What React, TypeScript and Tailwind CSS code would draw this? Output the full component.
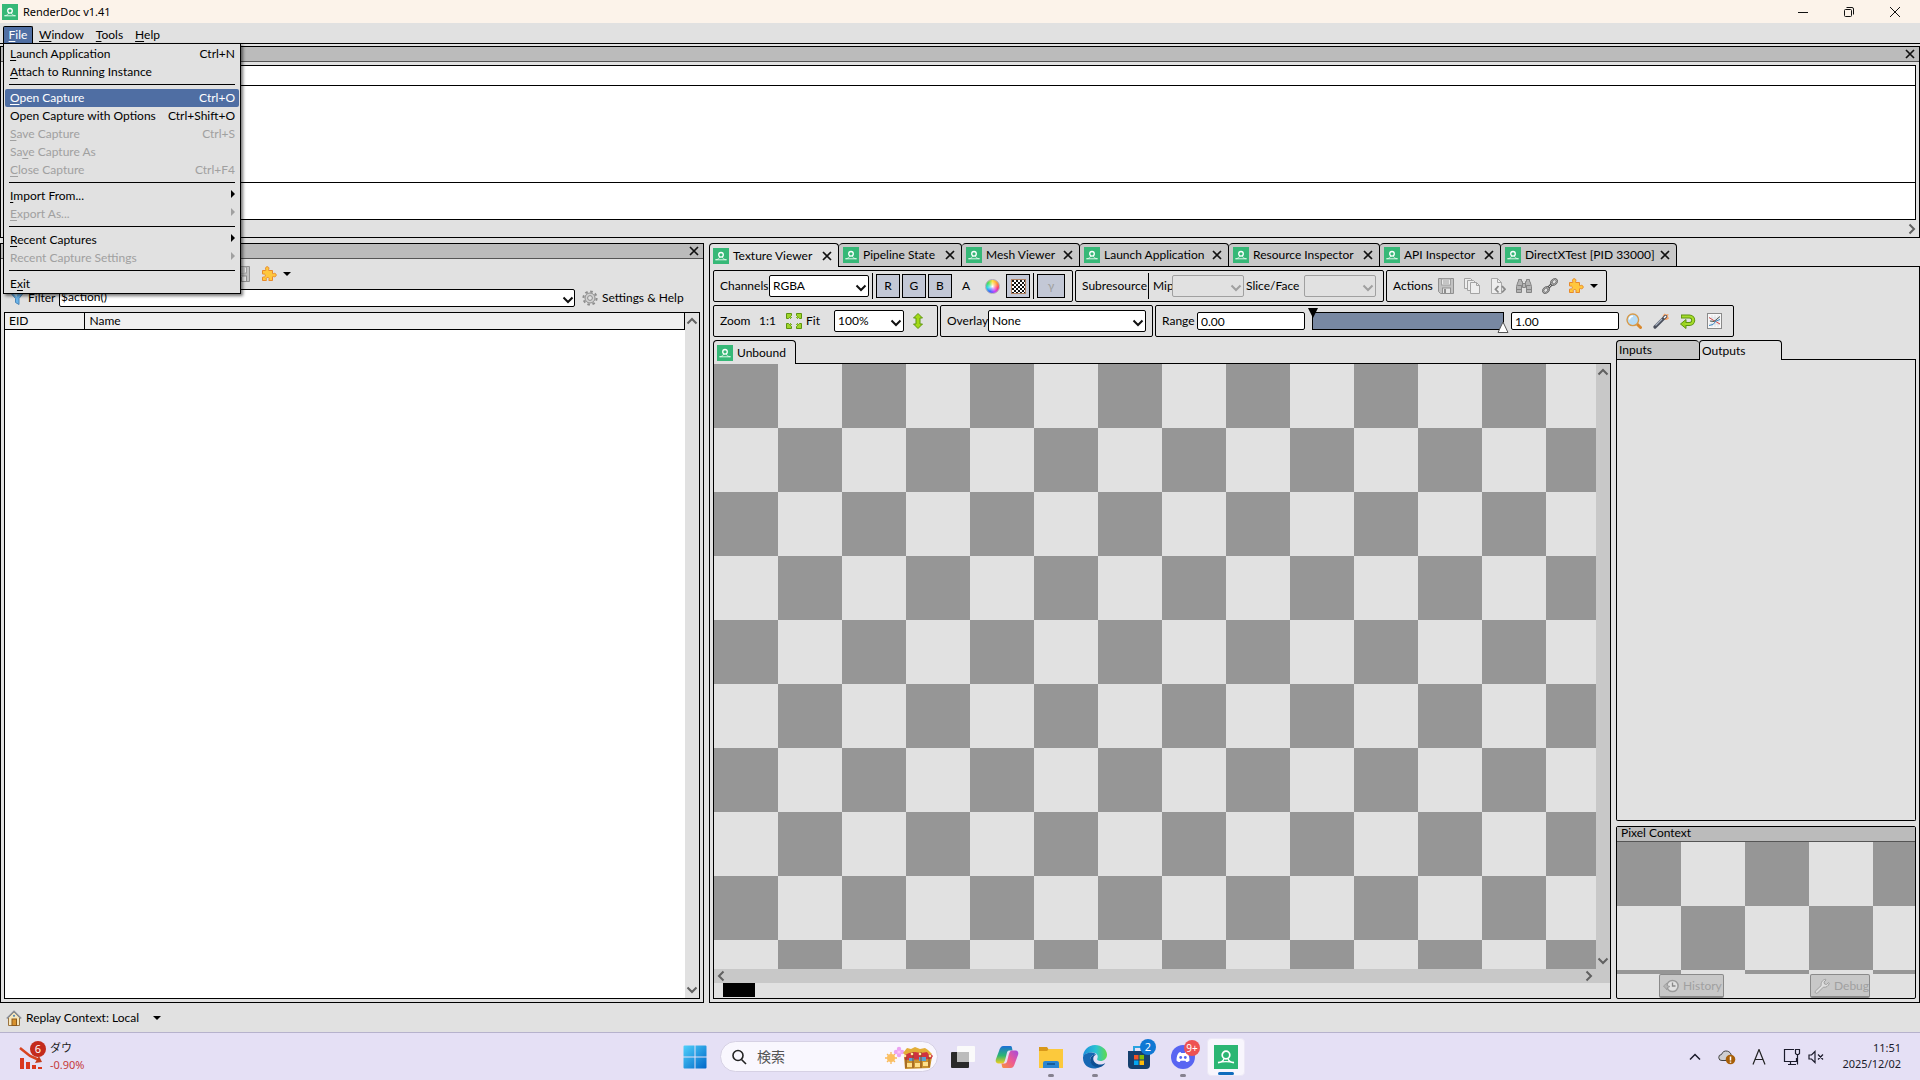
import React, { useState } from 'react';

const CHECKER = 'bg-[conic-gradient(#e1e1e1_25%,#969696_0_50%,#e1e1e1_0_75%,#969696_0)] bg-size-[128px_128px]';

const Logo: React.FC<{ className?: string }> = ({ className = 'w-4 h-4' }) => (
  <svg viewBox="0 0 16 16" className={`shrink-0 ${className}`}>
    <rect width="16" height="16" fill="#36b877" />
    <circle cx="8" cy="6.800" r="2.300" fill="none" stroke="#fff" strokeWidth="1.300" />
    <path d="M2.500 11.700c2.200 0 3.700-.8 4.100-2.700M13.500 11.700c-2.200 0-3.700-.8-4.100-2.700M2.500 11.800h11" fill="none" stroke="#d9f5e6" />
  </svg>
);

const Cross: React.FC<{ className?: string }> = ({ className = 'w-[10px] h-[10px]' }) => (
  <svg viewBox="0 0 10 10" className={`shrink-0 ${className}`}>
    <path d="M1 1l8 8M9 1l-8 8" stroke="#111" strokeWidth="1.7" />
  </svg>
);

const Chevron: React.FC<{ className?: string; color?: string }> = ({ className = '', color = '#606060' }) => (
  <svg viewBox="0 0 12 8" className={`w-3 h-2 shrink-0 ${className}`}>
    <path d="M1.500 1.500L6 6l4.500-4.500" fill="none" stroke={color} strokeWidth="2" />
  </svg>
);

const DropArrow = () => (
  <svg viewBox="0 0 8 4" className="w-2 h-1 shrink-0"><path d="M0 0h8L4 4z" /></svg>
);

const SaveIcon = () => (
  <svg viewBox="0 0 16 16" className="w-4 h-4 shrink-0">
    <path d="M.5 .5h15v15H2.500l-2-2z" fill="#c2c2c2" stroke="#909090" />
    <rect x="3.500" y="1" width="9" height="6" fill="#e9e9e9" stroke="#a0a0a0" />
    <path d="M5 3h6M5 5h6" stroke="#a0a0a0" />
    <rect x="4.500" y="10" width="8" height="5.500" fill="#e5e5e5" stroke="#909090" />
    <rect x="6" y="11" width="2" height="4" fill="#8d8d8d" />
  </svg>
);

const CopyIcon = () => (
  <svg viewBox="0 0 16 16" className="w-4 h-4 shrink-0" fill="#eee" stroke="#a3a3a3">
    <path d="M.5 .5h6l2 2v8h-8z" />
    <path d="M3.500 2.500h6l2 2v8h-8z" />
    <path d="M6.500 4.500h6l3 3v8h-9z" />
    <path d="M12.500 4.500v3h3" fill="none" />
  </svg>
);

const CodeFileIcon = () => (
  <svg viewBox="0 0 16 16" className="w-4 h-4 shrink-0">
    <path d="M1.500 .5h6l4 4v11h-10z" fill="#eee" stroke="#a8a8a8" />
    <path d="M7.500 .5v4h4" fill="none" stroke="#a8a8a8" />
    <path d="M8.500 8L5.500 11.300l3 3.200M12 8l3 3.300-3 3.200" fill="none" stroke="#8a8a8a" strokeWidth="1.800" />
  </svg>
);

const BinocularsIcon = () => (
  <svg viewBox="0 0 16 16" className="w-4 h-4 shrink-0" stroke="#858585" fill="#b4b4b4">
    <path d="M2.500 1.500h3v2h1v4h-1v7h-5V8.500l1.500-5h.5z" />
    <path d="M13.500 1.500h-3v2h-1v4h1v7h5V8.500L14 3.500h-.5z" />
    <path d="M6.500 5.500h3v4h-3zM.5 11.500h5M10.500 11.500h5M1.500 7.500h4M10.500 7.500h4" />
  </svg>
);

const LinkIcon = () => (
  <svg viewBox="0 0 16 16" className="w-4 h-4 shrink-0" fill="none">
    <path d="M5 11l6-6" stroke="#555" strokeWidth="2.600" />
    <path d="M5 11l6-6" stroke="#ccc" />
    <ellipse cx="4" cy="12" rx="3.200" ry="2.300" transform="rotate(-45 4 12)" stroke="#5c5c5c" strokeWidth="2" />
    <ellipse cx="12" cy="4" rx="3.200" ry="2.300" transform="rotate(-45 12 4)" stroke="#5c5c5c" strokeWidth="2" />
    <ellipse cx="4" cy="12" rx="3.200" ry="2.300" transform="rotate(-45 4 12)" stroke="#c4c4c4" strokeWidth=".7" />
    <ellipse cx="12" cy="4" rx="3.200" ry="2.300" transform="rotate(-45 12 4)" stroke="#c4c4c4" strokeWidth=".7" />
  </svg>
);

const PuzzleIcon = () => (
  <svg viewBox="0 0 16 16" className="w-4 h-4 shrink-0">
    <path
      d="M1.500 4.500h3.200c.6-.4-.4-1.200-.2-2.200.2-1 .8-1.600 1.700-1.600s1.600.6 1.700 1.600c.1 1-.8 1.800-.2 2.200h3.800v3c.4.500 1.100-.2 2-.2 1 0 1.700.8 1.700 1.800s-.7 1.700-1.700 1.700c-.9 0-1.600-.7-2-.1v3.800H7.900c-.5-.5.3-1 .3-1.700 0-.8-.7-1.300-1.500-1.300s-1.500.5-1.500 1.300c0 .7.700 1.200.2 1.700H1.500v-3.300c.5-.6 1.400 0 2-.3.500-.2.800-.7.800-1.400s-.3-1.200-.8-1.400c-.6-.2-1.500.3-2-.2z"
      fill="#ffc73d" stroke="#e8892a"
    />
  </svg>
);

const FunnelIcon = () => (
  <svg viewBox="0 0 16 16" className="w-4 h-4 shrink-0">
    <path d="M.5 1.500h15l-5.500 7v6l-3.500-2v-4z" fill="#69b4ea" stroke="#4c86b8" />
    <path d="M3 2.500h6L7.500 7z" fill="#c6e6fb" />
  </svg>
);

const GearIcon = () => (
  <svg viewBox="0 0 16 16" className="w-4 h-4 shrink-0" fill="none">
    <circle cx="8" cy="8" r="6.600" stroke="#8d8d8d" strokeWidth="2" strokeDasharray="2.600 2.580" />
    <circle cx="8" cy="8" r="5" stroke="#8d8d8d" fill="#d2d2d2" />
    <circle cx="8" cy="8" r="2.400" stroke="#8d8d8d" fill="#e1e1e1" />
  </svg>
);

const FitIcon = () => (
  <svg viewBox="0 0 16 16" className="w-4 h-4 shrink-0" fill="#9fd62a" stroke="#5d9410">
    <path d="M.5 .5h5v2l-1 1 1 1-1 1-1-1-1 1h-2zM15.500 .5h-5v2l1 1-1 1 1 1 1-1 1 1h2z" />
    <path d="M.5 15.500h5v-2l-1-1 1-1-1-1-1 1-1-1h-2zM15.500 15.500h-5v-2l1-1-1-1 1-1 1 1 1-1h2z" />
  </svg>
);

const UpDownIcon = () => (
  <svg viewBox="0 0 16 16" className="w-4 h-4 shrink-0">
    <path d="M8 .5l4.500 4.500H10v6h2.500L8 15.500 3.500 11H6V5H3.500z" fill="#a3d916" stroke="#5f980f" />
  </svg>
);

const ColorWheel = () => (
  <span className="w-[15px] h-[15px] rounded-full border border-[#b0a8b8] bg-[radial-gradient(circle,#fff_0%,#ffffff80_25%,transparent_60%),conic-gradient(#ffe03a,#ff9a30,#ff3b6b,#c63bff,#3b62ff,#28d6e8,#43e05a,#ffe03a)]" />
);

const CheckerIcon = () => (
  <span className="w-[15px] h-[15px] border border-[#b08060] bg-[conic-gradient(#fff_25%,#111_0_50%,#fff_0_75%,#111_0)] bg-size-[4px_4px]" />
);

const MagnifierIcon = () => (
  <svg viewBox="0 0 16 16" className="w-4 h-4 shrink-0">
    <path d="M10.500 10.500l4 4" stroke="#d9882c" strokeWidth="3" strokeLinecap="round" />
    <circle cx="6.800" cy="6.800" r="5.800" fill="#b8dcf6" stroke="#d79a4a" strokeWidth="1.400" />
    <path d="M3.500 6.500a3.400 3.400 0 0 1 3.400-3.300" fill="none" stroke="#fff" strokeWidth="1.500" />
  </svg>
);

const WandIcon = () => (
  <svg viewBox="0 0 16 16" className="w-4 h-4 shrink-0">
    <path d="M9.500 3l2-2.500 1.500 1L15.500 1l-.5 2.500 1 2-2.500 1.500-2 0z" fill="#f7a568" />
    <path d="M2 14L12.500 3.500" stroke="#4a4f5c" strokeWidth="3.200" strokeLinecap="round" />
    <path d="M2.500 12.500L9 6" stroke="#a9b2c0" strokeWidth="1.200" />
    <path d="M11 5l2-2" stroke="#fff" strokeWidth="1.500" />
  </svg>
);

const ReturnIcon = () => (
  <svg viewBox="0 0 16 16" className="w-4 h-4 shrink-0">
    <path d="M1 3.500h8.500a3.700 3.700 0 0 1 0 7.500H5" fill="none" stroke="#5c9410" strokeWidth="4" />
    <path d="M6 6.500v9L.5 11z" fill="#9ad31d" stroke="#5c9410" />
    <path d="M1.800 3.500h7.700a3.700 3.700 0 0 1 0 7.500H5" fill="none" stroke="#a6dc2a" strokeWidth="2.200" />
  </svg>
);

const HistogramIcon = () => (
  <svg viewBox="0 0 16 16" className="w-4 h-4 shrink-0" fill="none">
    <rect x=".5" y=".5" width="14" height="15" fill="#f8f8f8" stroke="#8a8a8a" />
    <path d="M2 5h11M2 8h11M2 11h11M5 2v12M8 2v12M11 2v12" stroke="#d3d8df" strokeWidth=".7" />
    <path d="M2 4.500l4 2.500 7 4" stroke="#d24a4a" />
    <path d="M2 12.500l4-1 3-3.500 4-1.500" stroke="#3a86c4" />
    <path d="M3 8l4 .5 6-5" stroke="#4c5a54" />
  </svg>
);

const ClockBackIcon = () => (
  <svg viewBox="0 0 16 16" className="w-4 h-4 shrink-0" fill="none">
    <circle cx="9.500" cy="8" r="5.600" stroke="#9b9b9b" strokeWidth="1.500" fill="#e0e0e0" />
    <path d="M9.500 4.500V8h3" stroke="#888" strokeWidth="1.300" />
    <path d="M.5 8L4 5v2.500l3 1-3 1.500V12z" fill="#b5b5b5" stroke="#999" strokeWidth=".8" />
  </svg>
);

const WrenchIcon = () => (
  <svg viewBox="0 0 16 16" className="w-4 h-4 shrink-0">
    <path d="M1.200 13.300l6-5.800C6.700 5 8 2 11.500 1.200l.5.800-2 2 .5 2 2 .5 2-2 .8.500c-.5 3.200-3.300 4.700-6 4.200L3.500 15c-1.200 1-3-.5-2.300-1.700z" fill="#dedede" stroke="#a0a0a0" />
  </svg>
);

const HouseIcon = () => (
  <svg viewBox="0 0 16 16" className="w-4 h-4 shrink-0">
    <path d="M2.500 7.500v8h11v-8L8 2z" fill="#f6e7bd" stroke="#9a7440" />
    <path d="M.8 8.500L8 1.300l7.200 7.200" fill="none" stroke="#8a8f98" strokeWidth="1.600" />
    <rect x="6" y="9" width="4.500" height="6.500" fill="#d8912c" stroke="#8c5a1c" />
    <circle cx="8" cy="5.800" r="1.100" fill="#5488b8" />
  </svg>
);

interface ComboProps {
  label: string;
  value: string;
  width: string;
  disabled?: boolean;
}

const Combo: React.FC<ComboProps> = ({ label, value, width, disabled }) => (
  <div className={`relative flex items-center h-[22px] ${width}`}>
    <select
      aria-label={label}
      disabled={disabled}
      className={`appearance-none w-full h-full rounded-[2px] border pl-[3px] pr-5 focus:outline-none ${disabled ? 'border-[#a0a0a0] bg-[#e1e1e1]' : 'border-black bg-white'}`}
    >
      <option>{value}</option>
    </select>
    <Chevron color={disabled ? '#a0a0a0' : '#111'} className="absolute right-[2px] top-1/2 -mt-[2px] pointer-events-none" />
  </div>
);

const Group: React.FC<{ width: string; children: React.ReactNode }> = ({ width, children }) => (
  <div className={`flex items-center shrink-0 h-8 pl-[6px] rounded-[2px] border border-black ${width}`}>{children}</div>
);

const Divider = () => <span className="w-px h-[26px] bg-black shrink-0" />;

const Toggle: React.FC<{ label: string; on?: boolean; wide?: boolean; children: React.ReactNode }> = ({ label, on, wide, children }) => {
  const [pressed, setPressed] = useState(!!on);
  return (
    <button
      aria-label={label}
      aria-pressed={pressed}
      onClick={() => setPressed(!pressed)}
      className={`flex items-center justify-center shrink-0 h-6 border ${wide ? 'w-7' : 'w-6'} ${pressed ? 'border-black bg-[#c3c8d6]' : 'border-transparent'}`}
    >
      {children}
    </button>
  );
};

const IconButton: React.FC<{ label: string; children: React.ReactNode }> = ({ label, children }) => (
  <button aria-label={label} className="flex items-center shrink-0">{children}</button>
);

const menuItems = [
  { before: '', key: 'L', after: 'aunch Application', shortcut: 'Ctrl+N' },
  { before: '', key: 'A', after: 'ttach to Running Instance' },
  null,
  { before: '', key: 'O', after: 'pen Capture', shortcut: 'Ctrl+O', active: true },
  { before: 'Open Capture with Options', key: '', after: '', shortcut: 'Ctrl+Shift+O' },
  { before: '', key: 'S', after: 'ave Capture', shortcut: 'Ctrl+S', disabled: true },
  { before: 'Sa', key: 'v', after: 'e Capture As', disabled: true },
  { before: '', key: 'C', after: 'lose Capture', shortcut: 'Ctrl+F4', disabled: true },
  null,
  { before: '', key: 'I', after: 'mport From...', sub: true },
  { before: '', key: 'E', after: 'xport As...', sub: true, disabled: true },
  null,
  { before: '', key: 'R', after: 'ecent Captures', sub: true },
  { before: 'Recent Capture Settings', key: '', after: '', sub: true, disabled: true },
  null,
  { before: 'E', key: 'x', after: 'it' },
];

const FileMenu = () => (
  <div role="menu" className="absolute left-0 top-full z-10 w-[238px] border border-black bg-[#e1e1e1] p-px pb-0 shadow-[2px_2px_3px_#0008]">
    {menuItems.map((item, i) =>
      item === null ? (
        <div key={i} className="h-2 pt-[3px] px-1"><div className="h-px bg-black" /></div>
      ) : (
        <button
          key={i}
          role="menuitem"
          disabled={item.disabled}
          className={`flex items-center justify-between w-full h-[18px] pl-[5px] pr-1 rounded-[2px] ${item.active ? 'bg-[#4f6ea3] text-white' : ''} ${item.disabled ? 'text-[#a0a0a0]' : ''}`}
        >
          <span>{item.before}<u className="underline-offset-2">{item.key}</u>{item.after}</span>
          {item.shortcut && <span>{item.shortcut}</span>}
          {item.sub && <svg viewBox="0 0 4 8" className="w-1 h-2 mb-1" fill="currentColor"><path d="M0 0l4 4-4 4z" /></svg>}
        </button>
      )
    )}
  </div>
);

const menus = [
  { key: 'W', rest: 'indow' },
  { key: 'T', rest: 'ools' },
  { key: 'H', rest: 'elp' },
];

const MenuBar = () => {
  const [open, setOpen] = useState(true);
  return (
    <nav className="flex items-end h-[21px] pl-[3px] border-b border-black shrink-0">
      <div className="relative">
        <button onClick={() => setOpen(!open)} className="flex items-center h-[17px] w-[30px] justify-center rounded-t-[2px] border border-b-0 border-black bg-[#4f6ea3] text-white">
          <span><u className="underline-offset-2">F</u>ile</span>
        </button>
        {open && <FileMenu />}
      </div>
      {menus.map(m => (
        <button key={m.key} className="h-[17px] px-[6px]">
          <u className="underline-offset-2">{m.key}</u>{m.rest}
        </button>
      ))}
    </nav>
  );
};

const TitleBar = () => (
  <header className="flex items-center h-[23px] pl-[2px] bg-[#fcf3ea] shrink-0 font-['Noto_Sans',sans-serif]">
    <Logo />
    <span className="ml-[5px] text-[11px]">RenderDoc v1.41</span>
    <div className="flex items-center gap-9 ml-auto pr-5">
      <button aria-label="Minimize"><svg viewBox="0 0 10 10" className="w-[10px] h-[10px]"><path d="M0 5.500h10" stroke="#111" /></svg></button>
      <button aria-label="Restore">
        <svg viewBox="0 0 10 10" className="w-[10px] h-[10px]" fill="none" stroke="#111">
          <rect x=".5" y="2.500" width="7" height="7" rx="1" />
          <path d="M2.500 .5H8a1.500 1.500 0 0 1 1.500 1.500v5.500" />
        </svg>
      </button>
      <button aria-label="Close"><svg viewBox="0 0 10 10" className="w-[10px] h-[10px]"><path d="M0 0l10 10M10 0L0 10" stroke="#111" /></svg></button>
    </div>
  </header>
);

const PanelHeader = () => (
  <div className="flex items-center justify-end h-[15px] pr-1 bg-[#bbb] border-b border-[#555] shrink-0">
    <IconButton label="Close panel"><Cross /></IconButton>
  </div>
);

const TimelinePanel = () => (
  <section className="flex flex-col h-[192px] mt-[2px] border border-black shrink-0">
    <PanelHeader />
    <div className="flex flex-col flex-1 mt-[3px] mx-[3px] border border-black bg-white">
      <div className="h-5 border-b border-black" />
      <div className="flex-1 border-b border-black" />
      <div className="h-9" />
    </div>
    <div className="flex items-center justify-between h-[17px] px-px shrink-0">
      <Chevron className="rotate-90" />
      <Chevron className="-rotate-90" />
    </div>
  </section>
);

const EventBrowser = () => (
  <section className="flex flex-col min-w-0 border border-black">
    <PanelHeader />
    <div className="flex items-center h-[30px] pl-[233px] gap-[11px] shrink-0">
      <IconButton label="Save"><SaveIcon /></IconButton>
      <button aria-label="Extensions" className="flex items-center gap-[6px]"><PuzzleIcon /><DropArrow /></button>
    </div>
    <div className="flex items-center h-[18px] pl-2 pr-[20px] shrink-0">
      <FunnelIcon />
      <label htmlFor="filter" className="ml-[3px] w-[31px]">Filter</label>
      <div className="relative flex-1 h-[18px]">
        <input id="filter" defaultValue="$action()" className="w-full h-full px-px pb-[3px] rounded-[2px] border border-black bg-white focus:outline-none" />
        <Chevron color="#111" className="absolute right-[1px] top-[7px]" />
      </div>
      <button className="flex items-center gap-1 w-[108px] pl-[7px] whitespace-nowrap"><GearIcon />Settings &amp; Help</button>
    </div>
    <div className="flex flex-1 mt-[5px] mx-[3px] mb-[3px] border border-black bg-white min-h-0">
      <div className="flex-1">
        <table className="w-full border-collapse">
          <thead>
            <tr className="h-4 bg-[#f0f0f0] text-left">
              <th className="w-[79px] p-0 pl-1 font-normal leading-[15px] border-b border-r border-black">EID</th>
              <th className="p-0 pl-[5px] font-normal leading-[15px] border-b border-r border-black">Name</th>
            </tr>
          </thead>
        </table>
      </div>
      <div className="flex flex-col items-center justify-between w-[14px] py-1 bg-[#e1e1e1]">
        <Chevron className="rotate-180" />
        <Chevron />
      </div>
    </div>
  </section>
);

const tabs = [
  { title: 'Texture Viewer', width: 'w-[130px]' },
  { title: 'Pipeline State', width: 'w-[123px]' },
  { title: 'Mesh Viewer', width: 'w-[118px]' },
  { title: 'Launch Application', width: 'w-[149px]' },
  { title: 'Resource Inspector', width: 'w-[151px]' },
  { title: 'API Inspector', width: 'w-[121px]' },
  { title: 'DirectXTest [PID 33000]', width: 'w-[176px]' },
];

const TabStrip = () => {
  const [current, setCurrent] = useState(0);
  return (
    <div className="flex h-6 shrink-0" role="tablist">
      {tabs.map((tab, i) => (
        <div
          key={tab.title}
          className={`flex items-center pr-[6px] rounded-t-[4px] border-t border-r border-black shrink-0 ${tab.width} ${i === 0 ? 'border-l pl-[3px]' : 'pl-1'} ${current === i ? 'bg-[#e1e1e1]' : 'bg-[#c8c8c8] border-b'}`}
        >
          <button role="tab" aria-selected={current === i} onClick={() => setCurrent(i)} className="flex items-center gap-1 whitespace-nowrap">
            <Logo />{tab.title}
          </button>
          <button aria-label={`Close ${tab.title}`} className="ml-auto"><Cross /></button>
        </div>
      ))}
      <div className="flex-1 border-b border-black" />
    </div>
  );
};

const Toolbars = () => (
  <div className="flex flex-col gap-[3px] shrink-0">
    <div className="flex gap-[2px]">
      <Group width="w-[360px]">
        <span className="w-[49px]">Channels</span>
        <Combo label="Channels" value="RGBA" width="w-[100px]" />
        <div className="flex items-center ml-[3px] gap-[3px]">
          <Divider />
          <div className="flex items-center gap-[2px]">
            <Toggle label="Red" on>R</Toggle>
            <Toggle label="Green" on>G</Toggle>
            <Toggle label="Blue" on>B</Toggle>
            <Toggle label="Alpha">A</Toggle>
            <Toggle label="Background colour"><ColorWheel /></Toggle>
            <Toggle label="Checkerboard" on><CheckerIcon /></Toggle>
          </div>
          <Divider />
          <Toggle label="Gamma" on wide><span className="text-[#a0a0a0]">γ</span></Toggle>
        </div>
      </Group>
      <Group width="w-[309px]">
        <span className="w-[66px]">Subresource</span>
        <Divider />
        <span className="w-[23px] pl-1">Mip</span>
        <Combo label="Mip" value="" width="w-[72px]" disabled />
        <span className="w-[60px] pl-[2px]">Slice/Face</span>
        <Combo label="Slice/Face" value="" width="w-[72px]" disabled />
      </Group>
      <Group width="w-[221px]">
        <span className="w-[45px]">Actions</span>
        <div className="flex items-center gap-[10px]">
          <IconButton label="Save texture"><SaveIcon /></IconButton>
          <IconButton label="Copy"><CopyIcon /></IconButton>
          <IconButton label="View as buffer"><CodeFileIcon /></IconButton>
          <IconButton label="Find"><BinocularsIcon /></IconButton>
          <IconButton label="Resource links"><LinkIcon /></IconButton>
          <button aria-label="Extensions" className="flex items-center gap-[6px]"><PuzzleIcon /><DropArrow /></button>
        </div>
      </Group>
    </div>
    <div className="flex gap-[2px]">
      <Group width="w-[225px]">
        <span className="w-[39px]">Zoom</span>
        <button className="w-[27px] text-left">1:1</button>
        <button className="flex items-center gap-1 w-[48px]"><FitIcon />Fit</button>
        <Combo label="Zoom" value="100%" width="w-[70px]" />
        <span className="w-[6px]" />
        <IconButton label="Flip vertically"><UpDownIcon /></IconButton>
      </Group>
      <Group width="w-[213px]">
        <span className="w-[41px]">Overlay</span>
        <Combo label="Overlay" value="None" width="w-[158px]" />
      </Group>
      <Group width="w-[579px]">
        <label htmlFor="range-min" className="w-[35px]">Range</label>
        <input id="range-min" defaultValue="0.00" className="w-[108px] h-[18px] px-[3px] rounded-[2px] border border-black bg-white focus:outline-none" />
        <div className="relative w-[192px] h-[18px] mx-[7px] border border-black bg-[#7888a2]">
          <svg viewBox="0 0 10 10" className="absolute -left-[5px] -top-[5px] w-[10px] h-[10px]"><path d="M0 0h10L5 10z" /></svg>
          <svg viewBox="0 0 12 12" className="absolute -right-[6px] -bottom-[4px] w-3 h-3"><path d="M1 11.500L6 1l5 10.500z" fill="#fff" stroke="#555" /></svg>
          <input type="range" aria-label="Black point" defaultValue="0" className="absolute inset-y-0 left-0 w-1/2 opacity-0" />
          <input type="range" aria-label="White point" defaultValue="100" className="absolute inset-y-0 right-0 w-1/2 opacity-0" />
        </div>
        <input aria-label="Range maximum" defaultValue="1.00" className="w-[108px] h-[18px] px-[3px] rounded-[2px] border border-black bg-white focus:outline-none" />
        <div className="flex items-center gap-[11px] ml-[7px]">
          <IconButton label="Zoom range"><MagnifierIcon /></IconButton>
          <IconButton label="Auto-fit range"><WandIcon /></IconButton>
          <IconButton label="Reset range"><ReturnIcon /></IconButton>
          <IconButton label="Histogram"><HistogramIcon /></IconButton>
        </div>
      </Group>
    </div>
  </div>
);

const TextureView = () => (
  <div className="flex flex-col flex-1 min-w-0">
    <div className="flex h-6 shrink-0">
      <button className="flex items-center gap-1 w-[83px] pl-[3px] rounded-t-[4px] border border-b-0 border-black">
        <Logo />Unbound
      </button>
      <div className="flex-1 border-b border-black" />
    </div>
    <div className="flex flex-col flex-1 min-h-0 border border-t-0 border-black">
      <div className="flex flex-1 min-h-0">
        <div className={`flex-1 ${CHECKER}`} />
        <div className="flex flex-col items-center justify-between w-[14px] py-1 bg-[#c8c8c8]">
          <Chevron className="rotate-180" />
          <Chevron />
        </div>
      </div>
      <div className="flex items-center justify-between h-[14px] pl-px pr-[15px] bg-[#c8c8c8] shrink-0">
        <Chevron className="rotate-90" />
        <Chevron className="-rotate-90" />
      </div>
      <div className="flex h-[15px] pl-[9px] pb-px shrink-0">
        <div className="w-8 bg-black" />
      </div>
    </div>
  </div>
);

const SidePanels = () => (
  <div className="flex flex-col w-[300px] gap-[5px] shrink-0">
    <div className="flex flex-col flex-1">
      <div className="flex h-5 shrink-0" role="tablist">
        <button role="tab" aria-selected="false" className="w-[83px] pl-[2px] text-left rounded-t-[4px] border border-r-0 border-black bg-[#c8c8c8]">Inputs</button>
        <button role="tab" aria-selected="true" className="w-[83px] pl-[2px] text-left rounded-t-[4px] border border-b-0 border-black">Outputs</button>
        <div className="flex-1 border-b border-black" />
      </div>
      <div className="flex-1 border border-t-0 border-black rounded-b-[2px]" />
    </div>
    <div className="flex flex-col h-[173px] border border-black rounded-[2px] shrink-0">
      <h2 className="h-[15px] pl-1 leading-3 bg-[#bbb] border-b border-[#555] shrink-0">Pixel Context</h2>
      <div className={`flex-1 ${CHECKER}`} />
      <div className="flex justify-between h-[24px] pl-[42px] pr-[45px] text-[#a0a0a0] shrink-0">
        <button disabled className="flex items-center gap-1 w-[65px] h-[24px] pl-[3px] rounded-[2px] border border-[#8a8a8a] border-b-2 bg-[#c8c8c8]"><ClockBackIcon />History</button>
        <button disabled className="flex items-center gap-1 w-[60px] h-[24px] pl-[3px] rounded-[2px] border border-[#8a8a8a] border-b-2 bg-[#c8c8c8]"><WrenchIcon />Debug</button>
      </div>
    </div>
  </div>
);

const MainDock = () => (
  <section className="flex flex-col min-w-0 min-h-0">
    <TabStrip />
    <div className="flex flex-col flex-1 min-h-0 gap-[3px] px-[3px] pt-[3px] pb-[3px] border border-t-0 border-black">
      <Toolbars />
      <div className="flex flex-1 min-h-0 gap-[5px]">
        <TextureView />
        <SidePanels />
      </div>
    </div>
  </section>
);

const StatusBar = () => (
  <footer className="flex items-center h-[29px] pl-[6px] shrink-0">
    <HouseIcon />
    <button className="flex items-center gap-[14px] ml-1">Replay Context: Local<DropArrow /></button>
  </footer>
);

const Taskbar = () => (
  <footer className="relative flex items-center justify-between h-12 pl-[18px] pr-[19px] bg-[#e5e0f5] border-t border-[#b6b2cc] shrink-0 font-['Noto_Sans','Noto_Sans_CJK_JP',sans-serif]">
    <button className="flex items-center gap-[4px] pb-[2px] text-left">
      <svg viewBox="0 0 28 32" className="w-7 h-8">
        <path d="M2 8l10 8 9 4" fill="none" stroke="#d8431f" strokeWidth="2.500" />
        <path d="M24 22l-7 1 4-7z" fill="#c33a1a" />
        <path d="M2 18h4v11H2zM8 22h4v7H8zM14 25h4v4h-4zM20 27h4v2h-4z" fill="#d9381e" />
        <circle cx="20" cy="9" r="8" fill="#c42b1c" />
        <text x="20" y="13" fontSize="11" fill="#fff" textAnchor="middle">6</text>
      </svg>
      <span className="leading-[17px] text-[11px]"><span className="block text-[#222]">ダウ</span><span className="block text-[#c63a3a]">-0.90%</span></span>
    </button>
    <div className="absolute left-1/2 -translate-x-1/2 flex items-center pl-2 h-full">
      <button aria-label="Start" className="w-6 h-6">
        <svg viewBox="0 0 24 24">
          <defs><linearGradient id="win" x1="0" y1="0" x2="1" y2="1"><stop offset="0" stopColor="#4fd0fb" /><stop offset="1" stopColor="#0067c8" /></linearGradient></defs>
          <path d="M1.500 .5h10v11h-11v-10a1 1 0 0 1 1-1zM12.500 .5h10a1 1 0 0 1 1 1v10h-11zM.5 12.500h11v11h-10a1 1 0 0 1-1-1zM12.500 12.500h11v10a1 1 0 0 1-1 1h-10z" fill="url(#win)" />
        </svg>
      </button>
      <label className="flex items-center w-[218px] h-[31px] ml-[13px] pl-[10px] pr-1 rounded-full border border-[#d6d1e4] bg-[#f9f7fe]">
        <svg viewBox="0 0 16 16" className="w-4 h-4 shrink-0" fill="none" stroke="#222" strokeWidth="1.600"><circle cx="7" cy="6.500" r="5" /><path d="M10.500 10.500l4.500 4.500" /></svg>
        <input aria-label="検索" placeholder="検索" className="w-full ml-[10px] text-sm bg-transparent placeholder:text-[#555] focus:outline-none" />
        <svg viewBox="0 0 48 26" className="w-12 h-[26px] shrink-0">
          <g stroke="#f7b95c" strokeWidth="1.300"><path d="M6 8v12M0 14h12M2 10l8 8M10 10l-8 8" /></g>
          <circle cx="6" cy="14" r="4" fill="#fbbf60" />
          <g fill="#eca4f3"><circle cx="14" cy="5" r="2.200" /><circle cx="17" cy="8" r="2.200" /><circle cx="14" cy="11" r="2.200" /><circle cx="11" cy="8" r="2.200" /></g>
          <circle cx="14" cy="8" r="1.600" fill="#fbc6f7" />
          <path d="M19 13l28 0-2 11-25 1z" fill="#c9922f" />
          <path d="M19 12l4-6 19 0 6 6-2 3-26 1z" fill="#cf3340" />
          <path d="M18 9l4-5 4 1 4-2 5 2 5-1 3 2 4 4-3 1-2-3-6 1-6-1-6 1-4 2z" fill="#e3ae38" />
          <path d="M24 14h5v3h-5zM34 13h7v4h-7z" fill="#5aa0d4" />
          <path d="M22 19h5v4h-5zM30 19h5v4h-5zM38 18h5v4h-5z" fill="#ffe08a" />
          <path d="M21 12v12M28 8v16M36 8v16M44 12v11" stroke="#8a4a1d" />
          <g fill="#ffe9a0"><circle cx="20" cy="12" r="1.300" /><circle cx="27" cy="10" r="1.300" /><circle cx="35" cy="10" r="1.300" /><circle cx="45" cy="12" r="1.300" /></g>
        </svg>
      </label>
      <div className="flex items-center gap-[5px] ml-[6px]">
        <button aria-label="Task view" className="w-[38px] flex justify-center">
          <svg viewBox="0 0 24 24" className="w-6 h-6"><rect x="0" y="7" width="18" height="16" rx="1" fill="#2a2a2a" /><rect x="6" y="1" width="18" height="16" rx="1" fill="#fafafa" /><rect x="6" y="7" width="12" height="10" fill="#bcbcbc" /></svg>
        </button>
        <button aria-label="Copilot" className="w-[39px] flex justify-center">
          <svg viewBox="0 0 24 24" className="w-6 h-6">
            <defs>
              <linearGradient id="cpa" x1="0" y1="0" x2="0" y2="1"><stop offset="0" stopColor="#1b6fd8" /><stop offset=".55" stopColor="#2bb673" /><stop offset="1" stopColor="#f2cf1d" /></linearGradient>
              <linearGradient id="cpb" x1="1" y1="0" x2="0" y2="1"><stop offset="0" stopColor="#a24be0" /><stop offset=".5" stopColor="#ee5a92" /><stop offset="1" stopColor="#f7923a" /></linearGradient>
            </defs>
            <path d="M15.500 1H8.500C6 1 4.800 3 4 6L1 14c-1 3 .5 4.500 3 4.500h3c2 0 2.700-2 3.500-5l1.500-6c.5-1.500 1.200-2 3-2h2.500C17 3 17 1 15.500 1z" fill="url(#cpa)" />
            <path d="M8.500 23h7c2.500 0 3.700-2 4.500-5l3-8c1-3-.5-4.500-3-4.500h-3c-2 0-2.700 2-3.500 5l-1.500 6c-.5 1.500-1.200 2-3 2H6.500C7 21 7 23 8.500 23z" fill="url(#cpb)" />
          </svg>
        </button>
        <button aria-label="File Explorer" className="w-[39px] flex justify-center relative">
          <svg viewBox="0 0 24 24" className="w-6 h-6"><path d="M0 2h8l2 3h-1v5H0z" fill="#d9981a" /><path d="M0 6h8l2-2h14v19H0z" fill="#fcc93c" /><path d="M4 23v-5a2 2 0 0 1 2-2h12a2 2 0 0 1 2 2v5z" fill="#2b86d1" /><path d="M8 19h8" stroke="#124f86" strokeWidth="1.500" /></svg>
          <span className="absolute -bottom-[8px] w-[6px] h-[3px] rounded-full bg-[#85818f]" />
        </button>
        <button aria-label="Edge" className="w-[39px] flex justify-center relative">
          <svg viewBox="0 0 24 24" className="w-6 h-6">
            <defs><linearGradient id="edge" x1="0" y1="0" x2="1" y2="0"><stop offset="0" stopColor="#1c8fdc" /><stop offset=".55" stopColor="#2bc3d2" /><stop offset="1" stopColor="#5fdb4a" /></linearGradient></defs>
            <path d="M0 12C0 5 5.500 0 12 0s12 4.500 12 9.500c0 4-3 6.500-6.500 6.500-2.500 0-4-1-3.200-2.500 1.500-3-.8-6-4.800-6C4.500 7.500 1 9.500 0 12z" fill="url(#edge)" />
            <path d="M0 12c1-3 4.500-4.500 8.500-4.500 2 0 3.800.8 4.800 2C9 9.500 6.500 12.500 7.500 16c1.200 4 6 6 10 5.500C11 26-.5 23 0 12z" fill="#1668b4" />
            <path d="M13.300 9.500C9.500 11 9.500 15 12 17.500c3 2.800 7 2.500 10.200.5-1 2-3 3.500-4.700 4C12.500 23 8 20.500 7.200 16 6.800 12.500 9 9.500 13.300 9.500z" fill="#0d4f94" />
          </svg>
          <span className="absolute -bottom-[8px] w-[6px] h-[3px] rounded-full bg-[#85818f]" />
        </button>
        <button aria-label="Microsoft Store" className="w-[39px] flex justify-center relative">
          <svg viewBox="0 0 24 24" className="w-6 h-6"><path d="M7 6V2h10v4" fill="none" stroke="#2aa3e0" strokeWidth="2" /><path d="M1 6h22v14a4 4 0 0 1-4 4H5a4 4 0 0 1-4-4z" fill="#15406e" /><path d="M7 10h4.500v4.500H7z" fill="#f35325" /><path d="M12.500 10H17v4.500h-4.500z" fill="#81bc06" /><path d="M7 15.500h4.500V20H7z" fill="#05a6f0" /><path d="M12.500 15.500H17V20h-4.500z" fill="#ffba08" /></svg>
          <span className="absolute -top-[6px] right-[2px] w-4 h-4 rounded-full bg-[#0f78d4] text-white text-[11px] leading-4 text-center">2</span>
        </button>
        <button aria-label="Discord" className="w-[39px] flex justify-center relative">
          <svg viewBox="0 0 24 24" className="w-6 h-6"><circle cx="12" cy="12" r="12" fill="#5865f2" /><path d="M8 7.500l1.500-.5.7 1h3.600l.7-1 1.500.5c1.700 1.500 2.500 4.500 2.500 8-1 1-2.200 1.500-3.300 1.500l-.8-1.300H9.600L8.800 17c-1.100 0-2.300-.5-3.300-1.500 0-3.500.8-6.500 2.500-8z" fill="#fff" /><circle cx="9.700" cy="12.500" r="1.400" fill="#5865f2" /><circle cx="14.300" cy="12.500" r="1.400" fill="#5865f2" /></svg>
          <span className="absolute -top-[5px] right-[2px] w-4 h-4 rounded-full bg-[#ee5253] text-white text-[10px] leading-4 text-center">9+</span>
          <span className="absolute -bottom-[8px] w-[6px] h-[3px] rounded-full bg-[#85818f]" />
        </button>
        <button aria-label="RenderDoc" className="w-[38px] h-[38px] flex items-center justify-center relative rounded-[4px] bg-[#f8f6fd] border border-[#ece8f6]">
          <svg viewBox="0 0 24 24" className="w-6 h-6"><rect width="24" height="24" fill="#2bb673" /><circle cx="12" cy="10" r="3.800" fill="none" stroke="#fff" strokeWidth="1.700" /><path d="M4 17.500c3.500-.2 5.500-1.500 6-4M20 17.500c-3.500-.2-5.500-1.500-6-4M4 18c5-1.800 11-1.800 16 0" fill="none" stroke="#fff" strokeWidth="1.300" /></svg>
          <span className="absolute bottom-0 w-4 h-[3px] rounded-full bg-[#0f6cbd]" />
        </button>
      </div>
    </div>
    <div className="flex items-center text-[#1b1b2b]">
      <button aria-label="Show hidden icons"><svg viewBox="0 0 12 8" className="w-3 h-2" fill="none" stroke="#1b1b2b" strokeWidth="1.500"><path d="M1 6.500l5-5 5 5" /></svg></button>
      <svg viewBox="0 0 18 16" className="w-[18px] h-4 ml-[17px]">
        <path d="M4 11.500a3 3 0 0 1-.5-6C4.500 2.500 7 1.500 9.500 2.200c2 .5 3.500 2 3.800 4.300v5z" fill="#cfcfd2" stroke="#444" />
        <circle cx="12.500" cy="10.500" r="4.800" fill="#a85f08" />
        <path d="M12.500 7.500v4M12.500 12.500v1.300" stroke="#fff" strokeWidth="1.500" />
      </svg>
      <svg viewBox="0 0 14 16" className="w-[14px] h-4 ml-[16px]" fill="none" stroke="#222"><path d="M1 15.500L7 .5l6 15M3 10.500h8" strokeWidth="1.200" /></svg>
      <svg viewBox="0 0 18 18" className="w-[18px] h-[18px] ml-[17px]" fill="none" stroke="#1b1b2b" strokeWidth="1.200"><path d="M11 1.500H1.500v12h12V10M5 16.500h8M7.500 13.500v3" /><path d="M12.500 1.500h4v4l-1 1h-2l-1-1zM14.500 6.500v10" /></svg>
      <svg viewBox="0 0 16 14" className="w-4 h-[14px] ml-[7px]" fill="none" stroke="#1b1b2b" strokeWidth="1.200"><path d="M1 5h2.500L7 1.500v11L3.500 9H1zM10 4.500l5 5M15 4.500l-5 5" /></svg>
      <span className="ml-[18px] pb-px text-[11px] text-right leading-4"><span className="block">11:51</span><span className="block">2025/12/02</span></span>
    </div>
  </footer>
);

export default function App() {
  return (
    <div className="flex flex-col h-screen overflow-hidden bg-[#e1e1e1] text-black text-[12px] leading-4 font-['Lato','Noto_Sans_CJK_JP',sans-serif]">
      <TitleBar />
      <MenuBar />
      <TimelinePanel />
      <main className="grid grid-cols-[704fr_1211fr] flex-1 min-h-0 gap-[5px] mt-[5px]">
        <EventBrowser />
        <MainDock />
      </main>
      <StatusBar />
      <Taskbar />
    </div>
  );
}
